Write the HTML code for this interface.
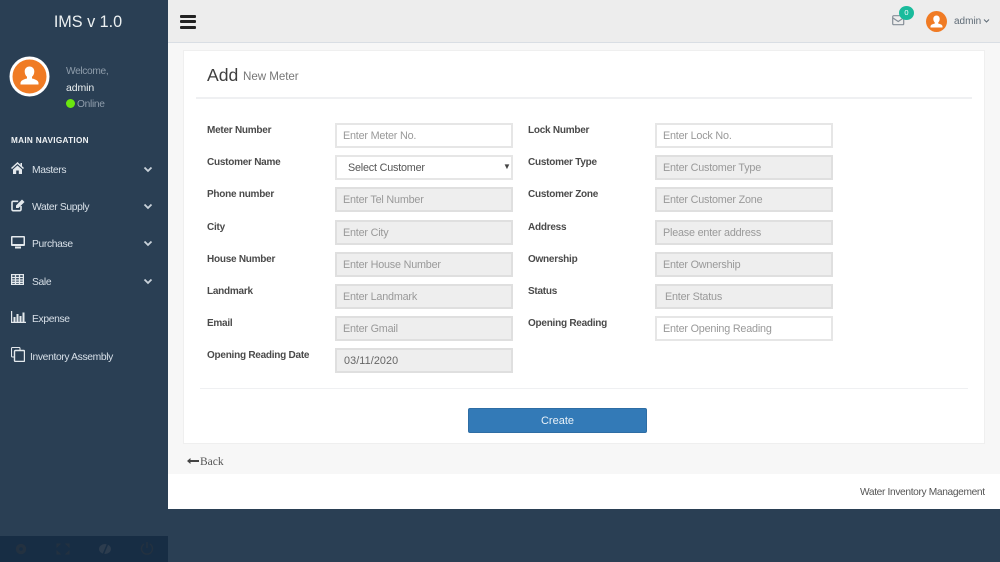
<!DOCTYPE html>
<html><head><meta charset="utf-8"><style>
html,body{margin:0;padding:0;width:1000px;height:562px;overflow:hidden;background:#2a3f54;font-family:"Liberation Sans",sans-serif;}
#w{position:absolute;left:0;top:0;width:1000px;height:562px;filter:blur(.3px);}
#w div,#w span,#w svg{position:absolute;white-space:nowrap;}
.in{width:178px;height:25px;box-sizing:border-box;border:2px solid #e6e6e6;background:#fff;color:#999;font-size:10.8px;letter-spacing:-.2px;line-height:23px;padding-left:6px;}
.in.d{background:#eee;border-color:#dfdfdf;}
.l{font-size:10px;line-height:12px;font-weight:bold;color:#4a4a4a;letter-spacing:-.25px;}
.m{font-size:10.3px;line-height:12px;color:#d8e0e8;left:32px;letter-spacing:-.35px;}
.ch{left:143px;}
</style></head><body><div id="w">
<div style="left:168px;top:0;width:832px;height:509px;background:#fff"></div>
<div style="left:168px;top:42px;width:832px;height:432px;background:#f7f7f7"></div>
<div style="left:168px;top:0;width:832px;height:43px;background:#ededed;border-bottom:1px solid #d9dee4;box-sizing:border-box"></div>

<!-- sidebar -->
<div style="left:0;top:0;width:168px;height:562px;background:#2a3f54"></div>
<div style="left:0;top:536px;width:168px;height:26px;background:#172d44"></div>
<div style="left:0;top:12px;width:176px;text-align:center;color:#ecf0f1;font-size:16.2px;line-height:20px">IMS v 1.0</div>
<svg style="left:9px;top:56px" width="41" height="41" viewBox="0 0 41 41"><circle cx="20.500" cy="20.500" r="18.500" fill="#f07b24" stroke="#fff" stroke-width="3"/><path d="M20.500 10.500c3 0 4.800 2.200 4.800 5 0 2.300-1 4.200-2.300 5.300v1.700c3 .7 6.500 2 6.500 4.500v1.500H11.500V27c0-2.500 3.500-3.800 6.500-4.500v-1.700c-1.300-1.100-2.300-3-2.300-5.300 0-2.800 1.800-5 4.800-5z" fill="#fff"/></svg>
<div style="left:66px;top:66px;font-size:10.2px;line-height:12px;color:#8f9dab;letter-spacing:-.35px">Welcome,</div>
<div style="left:66px;top:82px;font-size:10.5px;line-height:12px;color:#ecf0f1;letter-spacing:-.1px">admin</div>
<div style="left:66px;top:99px;width:9px;height:9px;border-radius:50%;background:#6be60f"></div>
<div style="left:77px;top:99px;font-size:10.2px;line-height:12px;color:#8f9dab;letter-spacing:-.3px">Online</div>
<div style="left:11px;top:136px;font-size:8.2px;line-height:10px;font-weight:bold;color:#f0f3f5;letter-spacing:.3px">MAIN NAVIGATION</div>

<svg style="left:11px;top:162px" width="13" height="12" viewBox="0 0 13 12"><path d="M6.500 0L0 6l1 1 5.500-5 5.500 5 1-1-2-1.900V1H9.500v1.700z M2 7.500V12h3.200V8.500h2.600V12H11V7.500L6.500 3.500z" fill="#e4e9ed"/></svg>
<div class="m" style="top:165px">Masters</div>
<svg style="left:11px;top:199px" width="14" height="13" viewBox="0 0 14 13"><path d="M10 7v3.500a1.200 1.200 0 0 1-1.200 1.200H2.200A1.200 1.200 0 0 1 1 10.500v-7a1.200 1.200 0 0 1 1.200-1.200h5" fill="none" stroke="#e4e9ed" stroke-width="1.600"/><path d="M5 6.500l6-6 2.500 2.500-6 6H5z" fill="#e4e9ed"/></svg>
<div class="m" style="top:202px">Water Supply</div>
<svg style="left:11px;top:236px" width="14" height="13" viewBox="0 0 14 13"><path d="M1 0h12a1 1 0 0 1 1 1v8a1 1 0 0 1-1 1H1a1 1 0 0 1-1-1V1a1 1 0 0 1 1-1zM1.500 1.500V8h11V1.500zM4 10.500h6V12.500H4z" fill="#e4e9ed" fill-rule="evenodd"/></svg>
<div class="m" style="top:239px">Purchase</div>
<svg style="left:11px;top:274px" width="13" height="11" viewBox="0 0 13 11"><path d="M.6.600h11.800v9.800H.6zM.6 3.500h11.800M.6 6h11.800M.6 8.300h11.800M4.500.600v9.800M8.500.600v9.800" fill="none" stroke="#e4e9ed" stroke-width="1.300"/></svg>
<div class="m" style="top:277px">Sale</div>
<svg style="left:11px;top:311px" width="15" height="12" viewBox="0 0 15 12"><path d="M.6 0v11.400H15" fill="none" stroke="#e4e9ed" stroke-width="1.200"/><path d="M2.500 6h2v5h-2zM5.500 3h2v8h-2zM8.500 5h2v6h-2zM11.500 1.500h2V11h-2z" fill="#e4e9ed"/></svg>
<div class="m" style="top:314px">Expense</div>
<svg style="left:11px;top:347px" width="14" height="15" viewBox="0 0 14 15"><path d="M9 3V1.500a1 1 0 0 0-1-1H1.500a1 1 0 0 0-1 1V9a1 1 0 0 0 1 1H3" fill="none" stroke="#e4e9ed" stroke-width="1.100"/><rect x="3.500" y="3.500" width="10" height="11" rx="1" fill="none" stroke="#e4e9ed" stroke-width="1.400"/></svg>
<div class="m" style="top:352px;left:30px">Inventory Assembly</div>

<svg class="ch" style="top:166px" width="10" height="8" viewBox="0 0 10 8"><path d="M1.500 1.500L5 5 8.500 1.500" fill="none" stroke="#c9d2da" stroke-width="1.800"/></svg>
<svg class="ch" style="top:203px" width="10" height="8" viewBox="0 0 10 8"><path d="M1.500 1.500L5 5 8.500 1.500" fill="none" stroke="#c9d2da" stroke-width="1.800"/></svg>
<svg class="ch" style="top:240px" width="10" height="8" viewBox="0 0 10 8"><path d="M1.500 1.500L5 5 8.500 1.500" fill="none" stroke="#c9d2da" stroke-width="1.800"/></svg>
<svg class="ch" style="top:278px" width="10" height="8" viewBox="0 0 10 8"><path d="M1.500 1.500L5 5 8.500 1.500" fill="none" stroke="#c9d2da" stroke-width="1.800"/></svg>

<svg style="left:0;top:536px" width="168" height="26" viewBox="0 0 168 26">
<circle cx="21" cy="13" r="3.500" fill="none" stroke="#233140" stroke-width="3.500"/>
<path d="M57 8h3l-3 3zM69 8h-3l3 3zM57 18h3l-3-3zM69 18h-3l3-3z" fill="#233140" stroke="#233140"/>
<ellipse cx="105" cy="13" rx="6" ry="5" fill="#2c3c4e"/><path d="M108 7l-5 12" stroke="#172d44" stroke-width="1.500"/>
<path d="M144 8a5.500 5.500 0 1 0 6 0" fill="none" stroke="#233140" stroke-width="1.500"/><path d="M147 6v6" stroke="#233140" stroke-width="1.500"/>
</svg>

<!-- top nav -->
<div style="left:180px;top:14.500px;width:16px;height:3px;border-radius:1px;background:#222"></div>
<div style="left:180px;top:20px;width:16px;height:3px;border-radius:1px;background:#222"></div>
<div style="left:180px;top:25.500px;width:16px;height:3px;border-radius:1px;background:#222"></div>
<svg style="left:892px;top:15px" width="13" height="11" viewBox="0 0 13 11"><rect x=".7" y=".7" width="11" height="9" rx="1" fill="none" stroke="#858e97" stroke-width="1.200"/><path d="M1 3l5.200 3.500L11.500 3" fill="none" stroke="#858e97" stroke-width="1.200"/></svg>
<div style="left:899px;top:6px;width:15px;height:14px;border-radius:50%;background:#1abb9c;color:#fff;font-size:7.500px;line-height:14px;text-align:center">0</div>
<svg style="left:926px;top:11px" width="21" height="21" viewBox="0 0 21 21"><circle cx="10.500" cy="10.500" r="10.500" fill="#f07b24"/><path d="M10.500 4.500c2 0 3.200 1.500 3.200 3.500 0 1.500-.7 2.800-1.500 3.500v1c2 .5 4.300 1.300 4.300 3v1H4.500v-1c0-1.700 2.300-2.500 4.300-3v-1C8 10.800 7.300 9.500 7.300 8c0-2 1.200-3.500 3.200-3.500z" fill="#fff"/></svg>
<div style="left:954px;top:16px;font-size:10px;line-height:12px;color:#5f6b76">admin</div>
<svg style="left:983px;top:18px" width="7" height="6" viewBox="0 0 7 6"><path d="M1 1.500L3.500 4 6 1.500" fill="none" stroke="#5f6b76" stroke-width="1"/></svg>

<!-- panel -->
<div style="left:183px;top:50px;width:802px;height:394px;background:#fff;border:1px solid #efefef;box-sizing:border-box"></div>
<div style="left:207px;top:65px;font-size:17.6px;line-height:21px;color:#3f3f3f">Add</div>
<div style="left:243px;top:70px;font-size:11.6px;line-height:14px;color:#777;letter-spacing:-.05px">New Meter</div>
<div style="left:196px;top:97px;width:776px;height:2px;background:#eff0f2"></div>

<div class="l" style="left:207px;top:125px">Meter Number</div>
<div class="l" style="left:207px;top:157px">Customer Name</div>
<div class="l" style="left:207px;top:189px">Phone number</div>
<div class="l" style="left:207px;top:222px">City</div>
<div class="l" style="left:207px;top:254px">House Number</div>
<div class="l" style="left:207px;top:286px">Landmark</div>
<div class="l" style="left:207px;top:318px">Email</div>
<div class="l" style="left:207px;top:350px">Opening Reading Date</div>

<div class="l" style="left:528px;top:125px">Lock Number</div>
<div class="l" style="left:528px;top:157px">Customer Type</div>
<div class="l" style="left:528px;top:189px">Customer Zone</div>
<div class="l" style="left:528px;top:222px">Address</div>
<div class="l" style="left:528px;top:254px">Ownership</div>
<div class="l" style="left:528px;top:286px">Status</div>
<div class="l" style="left:528px;top:318px">Opening Reading</div>

<div class="in" style="left:335px;top:123px">Enter Meter No.</div>
<div class="in" style="left:335px;top:155px;color:#555;padding-left:11px">Select Customer</div>
<div style="left:503px;top:162px;font-size:8px;line-height:10px;color:#444">▼</div>
<div class="in d" style="left:335px;top:187px">Enter Tel Number</div>
<div class="in d" style="left:335px;top:220px">Enter City</div>
<div class="in d" style="left:335px;top:252px">Enter House Number</div>
<div class="in d" style="left:335px;top:284px">Enter Landmark</div>
<div class="in d" style="left:335px;top:316px">Enter Gmail</div>
<div class="in d" style="left:335px;top:348px;color:#666;letter-spacing:.1px;padding-left:7px">03/11/2020</div>

<div class="in" style="left:655px;top:123px">Enter Lock No.</div>
<div class="in d" style="left:655px;top:155px">Enter Customer Type</div>
<div class="in d" style="left:655px;top:187px">Enter Customer Zone</div>
<div class="in d" style="left:655px;top:220px">Please enter address</div>
<div class="in d" style="left:655px;top:252px">Enter Ownership</div>
<div class="in d" style="left:655px;top:284px;padding-left:8px">Enter Status</div>
<div class="in" style="left:655px;top:316px">Enter Opening Reading</div>

<div style="left:200px;top:388px;width:768px;height:1px;background:#eff0f2"></div>
<div style="left:468px;top:408px;width:179px;height:25px;background:#337ab7;border:1px solid #2e6da4;border-radius:2px;box-sizing:border-box;color:#e8f1f8;font-size:11px;line-height:24px;text-align:center">Create</div>

<svg style="left:187px;top:457px" width="12" height="8" viewBox="0 0 12 8"><path d="M0 4l3.500-3v2H12v2H3.500v2z" fill="#444"/></svg>
<div style="left:200px;top:456px;font-family:'Liberation Serif',serif;font-size:11.500px;line-height:13px;color:#555">Back</div>
<div style="left:860px;top:487px;font-size:10.200px;line-height:12px;color:#555;letter-spacing:-.35px">Water Inventory Management</div>
</div></body></html>
